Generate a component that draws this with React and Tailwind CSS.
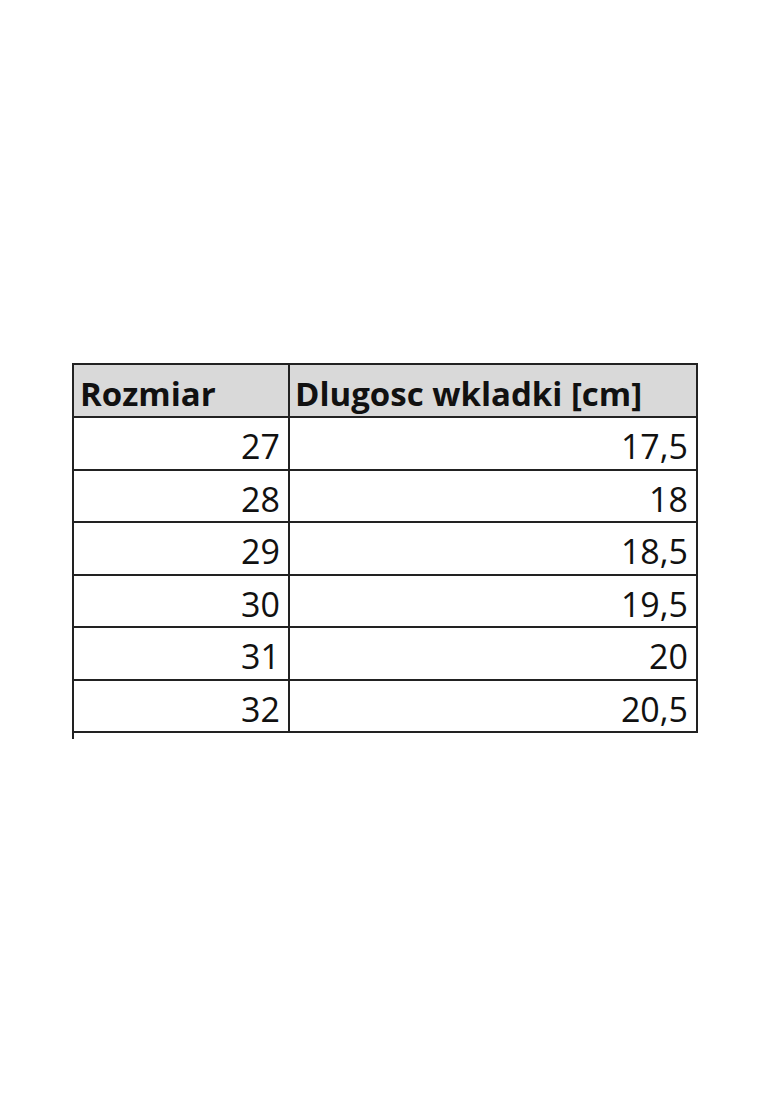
import React from 'react';

const rows = [
  ['27', '17,5'],
  ['28', '18'],
  ['29', '18,5'],
  ['30', '19,5'],
  ['31', '20'],
  ['32', '20,5'],
];

export default function App() {
  return (
    <div className="w-[760px] h-[1098px] bg-white pt-[363px] pl-[72px]" style={{ fontFamily: '"Open Sans", sans-serif' }}>
      <table className="border-collapse w-[626px] text-[#111]">
        <thead>
          <tr className="bg-[#d9d9d9] h-[53px]">
            <th className="w-[216px] border-2 border-[#222] text-left font-bold text-[33px] pl-[6px] pt-[6px] leading-none">Rozmiar</th>
            <th className="border-2 border-[#222] text-left font-bold text-[33px] pl-[5px] pt-[6px] leading-none">Dlugosc wkladki [cm]</th>
          </tr>
        </thead>
        <tbody>
          {rows.map(([size, len]) => (
            <tr key={size} className="h-[52.5px]">
              <td className="border-2 border-[#222] text-right text-[34px] pr-[8px] pt-[6px] leading-none">{size}</td>
              <td className="border-2 border-[#222] text-right text-[34px] pr-[8px] pt-[6px] leading-none">{len}</td>
            </tr>
          ))}
        </tbody>
      </table>
      <div className="w-[2px] h-[6px] bg-[#222]" />
    </div>
  );
}
